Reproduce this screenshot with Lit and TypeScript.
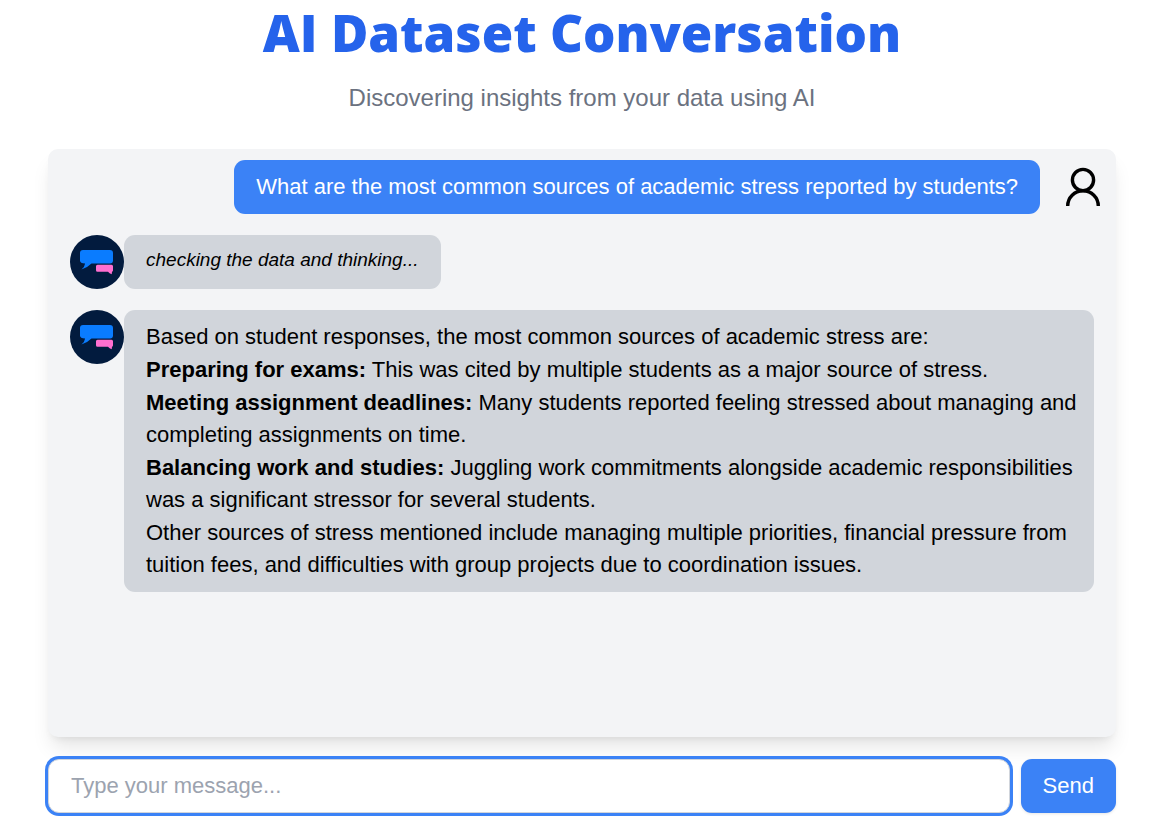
import { LitElement, html, css } from "lit";
import { customElement, state } from "lit/decorators.js";

interface Finding {
  label?: string;
  text: string;
}

@customElement("bot-avatar")
export class BotAvatar extends LitElement {
  static styles = css`
    :host {
      display: block;
      flex: none;
      width: 54px;
      height: 54px;
    }
    .logo {
      display: block;
      width: 100%;
      height: 100%;
    }
  `;

  render() {
    return html`
      <svg class="logo" viewBox="0 0 54 54" role="img" aria-label="Assistant">
        <circle cx="27" cy="27" r="27" fill="#021b3e" />
        <path
          d="M13 15h27q3 0 3 3v7.500q0 3-3 3H21.500q-4 4-10 6 3.300-2.800 3.600-6Q10 28.400 10 25.500V18q0-3 3-3z"
          fill="#0a7cff"
        />
        <path
          d="M27.500 29.800h14q1.500 0 1.500 1.500v4q0 1.200-1 1.500l-.3 2.500q-2.300-.8-3.700-2.500H27.500q-1.500 0-1.500-1.500v-4q0-1.500 1.500-1.500z"
          fill="#ff6fd0"
        />
      </svg>
    `;
  }
}

@customElement("user-avatar")
export class UserAvatar extends LitElement {
  static styles = css`
    :host {
      display: block;
      flex: none;
      width: 54px;
      height: 54px;
    }
    .figure {
      display: block;
      width: 100%;
      height: 100%;
    }
  `;

  render() {
    return html`
      <svg
        class="figure"
        viewBox="0 0 54 54"
        fill="none"
        stroke="#000"
        stroke-width="3.400"
        role="img"
        aria-label="You"
      >
        <circle cx="27" cy="20" r="10.600" />
        <path d="M11.700 46c0-8.500 6.800-15.200 15.300-15.200S42.300 37.500 42.300 46" />
      </svg>
    `;
  }
}

@customElement("app-root")
export class AppRoot extends LitElement {
  static styles = css`
    :host {
      display: block;
      box-sizing: border-box;
      padding: 0 40px 6px 48px;
      background: #fff;
      color: #000;
      font-family: "Liberation Sans", Arial, sans-serif;
      font-size: 22px;
      line-height: 32px;
    }
    .header {
      text-align: center;
    }
    .title {
      margin: 0;
      color: #2563eb;
      font-family: "Arial Black", "Open Sans", sans-serif;
      font-size: 51px;
      font-weight: 900;
      line-height: 64px;
    }
    .subtitle {
      margin: 18px 0 0;
      color: #6b7280;
      font-size: 24px;
      line-height: 32px;
    }
    .panel {
      display: flex;
      flex-direction: column;
      gap: 21px;
      box-sizing: border-box;
      min-height: 588px;
      margin-top: 35px;
      padding: 11px 22px;
      border-radius: 10px;
      background: #f3f4f6;
      box-shadow:
        0 14px 20px -4px rgba(0, 0, 0, 0.1),
        0 5px 8px -5px rgba(0, 0, 0, 0.1);
    }
    .row {
      display: flex;
      align-items: flex-start;
    }
    .row-user {
      justify-content: flex-end;
      gap: 16px;
      margin-right: -16px;
    }
    .bubble {
      box-sizing: border-box;
      min-height: 54px;
      padding: 11px 22px;
      border-radius: 11px;
      background: #d1d5db;
    }
    .bubble-user {
      background: #3b82f6;
      color: #fff;
    }
    .bubble-status {
      font-size: 19px;
      font-style: italic;
      line-height: 27px;
    }
    .bubble-answer {
      display: grid;
      flex: 1;
      gap: 1px;
      padding-right: 16px;
    }
    .line {
      margin: 0;
    }
    .composer {
      display: flex;
      gap: 11px;
      margin-top: 22px;
    }
    .message {
      flex: 1;
      min-width: 0;
      box-sizing: border-box;
      height: 54px;
      padding: 0 22px;
      border: 1px solid #d1d5db;
      border-radius: 11px;
      outline: none;
      background: #fff;
      box-shadow: 0 0 0 3px #3b82f6;
      color: #000;
      font: inherit;
    }
    .message::placeholder {
      color: #9ca3af;
      opacity: 1;
    }
    .send {
      height: 54px;
      padding: 0 22px;
      border: 0;
      border-radius: 11px;
      background: #3b82f6;
      box-shadow: 0 1px 3px rgba(0, 0, 0, 0.1);
      color: #fff;
      font: inherit;
      cursor: pointer;
    }
  `;

  @state() private findings: Finding[] = [
    { text: "Based on student responses, the most common sources of academic stress are:" },
    {
      label: "Preparing for exams:",
      text: "This was cited by multiple students as a major source of stress.",
    },
    {
      label: "Meeting assignment deadlines:",
      text: "Many students reported feeling stressed about managing and completing assignments on time.",
    },
    {
      label: "Balancing work and studies:",
      text: "Juggling work commitments alongside academic responsibilities was a significant stressor for several students.",
    },
    {
      text: "Other sources of stress mentioned include managing multiple priorities, financial pressure from tuition fees, and difficulties with group projects due to coordination issues.",
    },
  ];

  private submit(event: Event) {
    event.preventDefault();
  }

  render() {
    return html`
      <header class="header">
        <h1 class="title">AI Dataset Conversation</h1>
        <p class="subtitle">Discovering insights from your data using AI</p>
      </header>
      <main>
        <section class="panel" aria-label="Conversation">
          <div class="row row-user">
            <div class="bubble bubble-user">
              What are the most common sources of academic stress reported by students?
            </div>
            <user-avatar></user-avatar>
          </div>
          <div class="row">
            <bot-avatar></bot-avatar>
            <div class="bubble bubble-status">checking the data and thinking...</div>
          </div>
          <div class="row">
            <bot-avatar></bot-avatar>
            <div class="bubble bubble-answer">
              ${this.findings.map(
                (finding) => html`<p class="line">${finding.label
                  ? html`<strong>${finding.label}</strong> `
                  : ""}${finding.text}</p>`
              )}
            </div>
          </div>
        </section>
        <form class="composer" @submit=${this.submit}>
          <input class="message" type="text" aria-label="Message" placeholder="Type your message..." />
          <button class="send" type="submit">Send</button>
        </form>
      </main>
    `;
  }
}
